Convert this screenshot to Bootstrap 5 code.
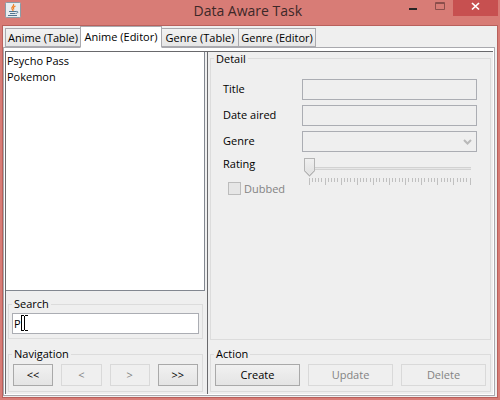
<!DOCTYPE html>
<html lang="en">
<head>
<meta charset="utf-8">
<meta name="viewport" content="width=device-width, initial-scale=1">
<title>Data Aware Task</title>
<link href="https://cdn.jsdelivr.net/npm/bootstrap@5.3.0/dist/css/bootstrap.min.css" rel="stylesheet">
<style>
  body { background: #d87c76; font: 11px/16px "Open Sans", "Noto Sans", sans-serif; color: #000; }
  .frame { padding: 0 2px 2px; }
  .titlebar { height: 25px; padding-left: 3px; }
  .app-icon { margin-top: 2px; }
  .app-title { font: 14px/22px "Open Sans", sans-serif; color: #3c2828; }
  .win-btn { width: 27px; height: 16px; border: 0; padding: 0; background: transparent; display: block; }
  .win-btn svg { display: block; }
  .win-btn.win-close { width: 45px; background: #c75050; }
  .client { border: 1px solid #b9605c; background: #efefef; padding: 1px 2px 1px 0; min-height: 0; }
  .nav-tabs.app-tabs { border: 0; padding-left: 2px; height: 20px; align-items: flex-end; }
  .app-tabs .nav-link { border: 1px solid #a9a9ae; border-radius: 0; margin: 0 0 0 -1px; padding: 0; height: 19px; line-height: 18px; color: #000; background: linear-gradient(#f2f2f2, #e6e6e6); white-space: nowrap; text-align: center; }
  .app-tabs .nav-item:first-child .nav-link { margin-left: 0; }
  .app-tabs .nav-item .nav-link.active { background: #fff; color: #000; height: 22px; line-height: 18px; border-color: #a9a9ae; border-bottom-color: #fff; margin-bottom: -1px; position: relative; }
  .w-a { width: 76px; } .w-b { width: 82px; } .w-c { width: 78px; }
  .pane { border: 1px solid #a9a9ae; background: #fff; padding: 3px 1px 1px; min-height: 0; }
  .split { background: #efefef; min-height: 0; }
  .side { flex: 0 0 202px; border-left: 1px solid #69696c; border-top: 1px solid #69696c; }
  .editor { border-left: 1px solid #69696c; border-top: 1px solid #69696c; min-width: 0; }
  .titles { border: 1px solid #828790; border-width: 0 1px 1px 0; background: #fff; margin-right: 2px; padding: 1px 0 0; min-height: 0; outline: 0; overflow: hidden; font: inherit; color: #000; border-radius: 0; }
  .titles option { padding: 0 1px; height: 16px; min-height: 16px; line-height: 16px; }
  .group { border: 1px solid #dcdcdc; min-width: 0; }
  .group legend { float: none; width: auto; font-size: 11px; line-height: 14px; height: 14px; margin: 0 0 0 3px; padding: 0 2px; }
  .side .group { margin: 6px 4px 0 2px; }
  .editor .group { margin: 0 2px 0 2px; }
  .editor .group.actions { margin-top: 7px; }
  .side .group.navs { margin-top: 8px; }
  .end { padding-bottom: 2px; }
  .field { height: 21px; padding: 0 1px; border: 1px solid #abadb3; border-radius: 0; font-size: 11px; line-height: 16px; color: #000; min-height: 0; }
  .field:disabled { background-color: #efefef; border-color: #abadb3; opacity: 1; }
  select.field { background-image: none; }
  .combo-arrow { position: absolute; right: 5px; top: 8px; pointer-events: none; }
  .search-box { padding: 2px 3px 4px; }
  .beam { position: absolute; left: 9px; top: 2px; pointer-events: none; }
  .btn.cmd { height: 22px; padding: 0; border: 1px solid #a9a9a9; border-radius: 0; font-size: 11px; line-height: 18px; color: #000; background: linear-gradient(#f1f1f1, #e4e4e4); flex: 1 1 0; }
  .btn.cmd:disabled { color: #838383; background: #efefef; border-color: #d9d9d9; opacity: 1; }
  .btn-row { gap: 8px; padding: 3px 4px 5px; }
  .fields { gap: 5px; }
  .line { display: flex; align-items: center; }
  .line > label { flex: 0 0 79px; }
  .detail-body { padding: 13px 13px 0 12px; }
  .rating-line { align-items: flex-start; margin-top: 4px; }
  .rating-area { padding: 1px 6px 0 0; }
  .rating { -webkit-appearance: none; appearance: none; display: block; width: 100%; height: 20px; margin: 0; padding: 0 0 0 2px; background: linear-gradient(#d2d2d2 0 1px, #e6e6e6 1px 2px, #d2d2d2 2px) 5px 10px / 100% 3px no-repeat; }
  .rating::-webkit-slider-runnable-track { height: 20px; background: transparent; }
  .rating::-webkit-slider-thumb { -webkit-appearance: none; width: 11px; height: 19px; margin-top: 1px; border: 0; border-radius: 0; clip-path: polygon(0 0, 100% 0, 100% 70%, 50% 100%, 0 70%); background: linear-gradient(#f0f0f0, #e4e4e4) 1px 1px / 9px 12px no-repeat, linear-gradient(#b4b4b4, #b4b4b4) 0 0 / 11px 13px no-repeat, conic-gradient(from -45deg at 50% 17px, #e4e4e4 90deg, #b4b4b4 0); }
  .ticks { display: block; width: 100%; height: 7px; }
  .tick-wrap { padding: 1px 0 0 7px; }
  .dubbed { padding-left: 5px; margin-top: -4px; gap: 3px; min-height: 0; }
  .dubbed .form-check-input:disabled { float: none; margin: 0; width: 13px; height: 13px; border: 1px solid #bcbcbc; border-radius: 0; background: #e6e6e6; opacity: 1; }
  .dubbed .form-check-input:disabled ~ .form-check-label { opacity: 1; color: #838383; }
</style>
<script src="https://cdn.jsdelivr.net/npm/bootstrap@5.3.0/dist/js/bootstrap.bundle.min.js" defer></script>
</head>
<body>
<div class="frame vh-100 d-flex flex-column">
  <header class="titlebar d-flex align-items-start">
    <svg class="app-icon flex-shrink-0" width="16" height="16" viewBox="0 0 16 16" aria-hidden="true">
      <rect x=".5" y=".5" width="15" height="15" rx="1" fill="#e8edf0" stroke="#8b9ba5"/>
      <path d="M8.500 2c1.500 2-3 3-1.500 5 .4 1 1.200 1 1 2M10.500 4c-2.500 1.200-2.500 2-1.500 3.500" fill="none" stroke="#ef8128" stroke-width="1.200"/>
      <path d="M4 9.500h7M5 11.500h5M3 13.500h9M11 9.500c3-.5 2 2-.5 2" fill="none" stroke="#537690"/>
    </svg>
    <h1 class="app-title flex-grow-1 text-center mb-0 ps-5 ms-4">&nbsp;Data Aware Task</h1>
    <button class="win-btn" type="button" aria-label="Minimize"><svg width="27" height="16" viewBox="0 0 27 16"><path d="M10 8h8v2h-8z" fill="#292525"/></svg></button>
    <button class="win-btn" type="button" aria-label="Maximize"><svg width="27" height="16" viewBox="0 0 27 16"><path d="M9.500 2.500h9v7h-9zM9 3.500h10" fill="none" stroke="#8c4e4b"/></svg></button>
    <button class="win-btn win-close" type="button" aria-label="Close"><svg width="45" height="16" viewBox="0 0 45 16"><path d="M19 3l7 6.500M26 3l-7 6.500" stroke="#fff" stroke-width="1.700"/></svg></button>
  </header>
  <main class="client d-flex flex-column flex-grow-1">
    <ul class="nav nav-tabs app-tabs flex-nowrap" role="tablist">
      <li class="nav-item"><button type="button" role="tab" class="nav-link w-a">Anime (Table)</button></li>
      <li class="nav-item"><button type="button" role="tab" class="nav-link active w-b" aria-selected="true">Anime (Editor)</button></li>
      <li class="nav-item"><button type="button" role="tab" class="nav-link w-c">Genre (Table)</button></li>
      <li class="nav-item"><button type="button" role="tab" class="nav-link w-c">Genre (Editor)</button></li>
    </ul>
    <div class="pane d-flex flex-grow-1">
      <div class="split d-flex flex-grow-1">
        <section class="side d-flex flex-column end">
          <select class="titles flex-grow-1" size="15" aria-label="Anime titles">
            <option>Psycho Pass</option>
            <option>Pokemon</option>
          </select>
          <fieldset class="group search">
            <legend>Search</legend>
            <div class="search-box">
              <div class="position-relative">
                <input class="form-control field" type="text" value="P" aria-label="Search">
                <svg class="beam" width="7" height="16" viewBox="0 0 7 16" aria-hidden="true"><path d="M.5 .5v15M0 .5h3M0 15.500h3M3.500 1v14M4 .5h3M4 15.500h3" fill="none" stroke="#000"/></svg>
              </div>
            </div>
          </fieldset>
          <fieldset class="group navs">
            <legend>Navigation</legend>
            <div class="btn-row d-flex">
              <button class="btn cmd" type="button">&lt;&lt;</button>
              <button class="btn cmd" type="button" disabled>&lt;</button>
              <button class="btn cmd" type="button" disabled>&gt;</button>
              <button class="btn cmd" type="button">&gt;&gt;</button>
            </div>
          </fieldset>
        </section>
        <section class="editor d-flex flex-column flex-grow-1 end">
          <fieldset class="group flex-grow-1">
            <legend>Detail</legend>
            <div class="detail-body">
              <div class="fields d-grid">
                <div class="line"><label for="title">Title</label><input id="title" class="form-control field" type="text" disabled></div>
                <div class="line"><label for="aired">Date aired</label><input id="aired" class="form-control field" type="text" disabled></div>
                <div class="line"><label for="genre">Genre</label>
                  <div class="position-relative flex-grow-1">
                    <select id="genre" class="form-select field" disabled></select>
                    <svg class="combo-arrow" width="9" height="7" viewBox="0 0 9 7" aria-hidden="true"><path d="M1 1l3.500 3.500L8 1" fill="none" stroke="#b9b9b9" stroke-width="2"/></svg>
                  </div>
                </div>
              </div>
              <div class="line rating-line"><label for="rating">Rating</label>
                <div class="rating-area flex-grow-1">
                  <input id="rating" class="rating" type="range" min="0" max="50" value="0" disabled>
                  <div class="tick-wrap"><svg id="ticks" class="ticks" viewBox="0 0 162 7" preserveAspectRatio="none" shape-rendering="crispEdges" aria-hidden="true"></svg></div>
                </div>
              </div>
              <div class="form-check dubbed d-flex align-items-center mb-0">
                <input class="form-check-input" type="checkbox" id="dubbed" disabled>
                <label class="form-check-label" for="dubbed">Dubbed</label>
              </div>
            </div>
          </fieldset>
          <fieldset class="group actions">
            <legend>Action</legend>
            <div class="btn-row d-flex">
              <button class="btn cmd" type="button">Create</button>
              <button class="btn cmd" type="button" disabled>Update</button>
              <button class="btn cmd" type="button" disabled>Delete</button>
            </div>
          </fieldset>
        </section>
      </div>
    </div>
  </main>
</div>
<script>
  // One tick per rating step, a taller one at every fifth
  let d = '';
  for (let i = 0; i <= 50; i++) {
    d += 'M' + Math.floor(i * 161 / 50) + ' 0h1v' + (i % 5 ? 4 : 7) + 'h-1z';
  }
  const path = document.createElementNS('http://www.w3.org/2000/svg', 'path');
  path.setAttribute('d', d);
  path.setAttribute('fill', '#c0c0c0');
  document.getElementById('ticks').append(path);
</script>
</body>
</html>
